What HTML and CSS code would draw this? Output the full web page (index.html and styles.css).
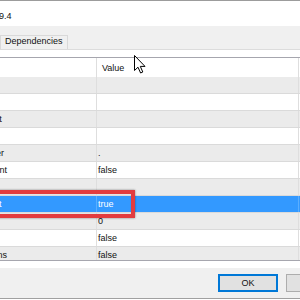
FILE: index.html
```html
<!DOCTYPE html>
<html lang="en">
<head>
  <meta charset="UTF-8">
  <title>Settings</title>
  <link rel="stylesheet" href="styles.css">
</head>
<body>
  <div class="window">
    <div class="titlebar"><span class="title">Settings v1.9.4</span></div>

    <div class="tabs">
      <div class="tab active">General</div>
      <div class="tab">Dependencies</div>
    </div>

    <div class="page">
      <div class="props">
        <div class="props-head">
          <div class="name">Property</div>
          <div class="val">Value</div>
          <div class="rest"></div>
        </div>
        <div class="props-body" id="rows"></div>
      </div>
    </div>

    <div class="buttons">
      <button class="btn default">OK</button>
      <button class="btn">Cancel</button>
      <button class="btn">Apply</button>
    </div>
  </div>

  <svg class="cursor" width="12" height="19" viewBox="0 0 12 19">
    <path d="M0.5 0.5 L0.5 15.5 L4 12.2 L6.6 18 L8.8 17 L6.3 11.4 L11 11.4 Z" fill="#fff" stroke="#000" stroke-width="1" stroke-linejoin="round"/>
  </svg>

  <script>
    const rows = document.getElementById('rows');

    // name, value, selected
    const props = [
      ['Encoding', ''],
      ['Delimiter', ''],
      ['DateTime format', ''],
      ['Culture', ''],
      ['Decimal delimiter', '.'],
      ['Merge with parent', 'false'],
      ['Null value', ''],
      ['Allow multiselect', 'true', true],
      ['Skip rows', '0'],
      ['Strict', 'false'],
      ['Quote all columns', 'false']
    ];

    props.forEach(([name, value, selected], i) => {
      const row = document.createElement('div');
      row.className = 'row' + (i % 2 === 0 ? ' alt' : '') + (selected ? ' sel' : '');
      row.innerHTML = `<div class="name">${name}</div><div class="val">${value}</div><div class="rest"></div>`;
      rows.appendChild(row);
    });
  </script>
</body>
</html>
```

FILE: styles.css
```css
body {
  margin: 0;
  overflow: hidden;
  background: #fff;
  color: #111;
  font-family: "Liberation Sans", Arial, sans-serif;
  font-size: 9px;
}

.window {
  width: 502px;
  margin-left: -80px;
  border-top: 1px solid #9c9c9c;
}

.titlebar {
  height: 25px;
  box-sizing: border-box;
  padding-left: 32px;
  padding-top: 5px;
  line-height: 20px;
  background: #fff;
}

.tabs {
  display: flex;
  align-items: flex-end;
  height: 23px;
  padding-left: 2px;
  background: #f0f0f0;
  border-bottom: 1px solid #dcdcdc;
}

.tab {
  height: 14px;
  box-sizing: border-box;
  padding: 0 4px 2px;
  line-height: 11px;
  border: 1px solid #d9d9d9;
  border-bottom: none;
  background: #f0f0f0;
}

.tab.active {
  width: 78px;
  height: 17px;
  margin-bottom: -1px;
  background: #fff;
}

.page {
  padding: 7px 10px;
  background: #fff;
}

.props {
  border: 1px solid #a6a6ae;
  border-right: none;
}

.props-head,
.row {
  display: flex;
}

.name {
  width: 166px;
  box-sizing: border-box;
  padding-left: 4px;
  border-right: 1px solid #dedede;
  white-space: nowrap;
  overflow: hidden;
}

.val {
  width: 202px;
  box-sizing: border-box;
  padding-left: 1px;
  border-right: 1px solid #dedede;
}

.rest {
  flex: 1;
}

.props-head {
  height: 19px;
  box-sizing: border-box;
  padding-top: 2px;
  line-height: 17px;
}

.props-head .name,
.props-head .val {
  margin-top: -2px;
  padding-top: 2px;
}

.props-head .name {
  color: #fff;
}

.props-head .val {
  padding-left: 5px;
}

.props-body {
  height: 183px;
  overflow: hidden;
}

.row {
  position: relative;
  height: 17px;
  box-sizing: border-box;
  padding-top: 1px;
  line-height: 15px;
  border-bottom: 1px solid #dadada;
  background: #fff;
}

.row > div {
  margin-top: -1px;
  padding-top: 1px;
}

.row.alt {
  background: #ebebeb;
}

.row.sel {
  z-index: 1;
  background: #3399ff;
  color: #fff;
}

.row.sel .name,
.row.sel .val {
  border-right-color: #5aaeff;
}

/* annotation box around the selected row */
.row.sel::after {
  content: '';
  position: absolute;
  top: -6px;
  left: 59px;
  width: 145px;
  height: 28px;
  box-sizing: border-box;
  border: 4px solid #e23c3f;
  box-shadow: 0 0 2px rgba(0, 0, 0, 0.45), inset 0 0 1px rgba(0, 0, 0, 0.3);
}

.buttons {
  display: flex;
  justify-content: flex-end;
  gap: 8px;
  height: 24px;
  padding: 6px 8px 0;
  background: #f0f0f0;
  border-bottom: 1px solid #a0a0a0;
}

.btn {
  width: 60px;
  height: 18px;
  padding: 0;
  box-sizing: border-box;
  border: 1px solid #adadad;
  background: #e1e1e1;
  color: #111;
  font-family: "Liberation Sans", Arial, sans-serif;
  font-size: 9px;
}

.btn.default {
  border-color: #0078d7;
  box-shadow: inset 0 0 0 1px #0078d7;
}

.cursor {
  position: absolute;
  top: 55px;
  left: 134px;
}
```
